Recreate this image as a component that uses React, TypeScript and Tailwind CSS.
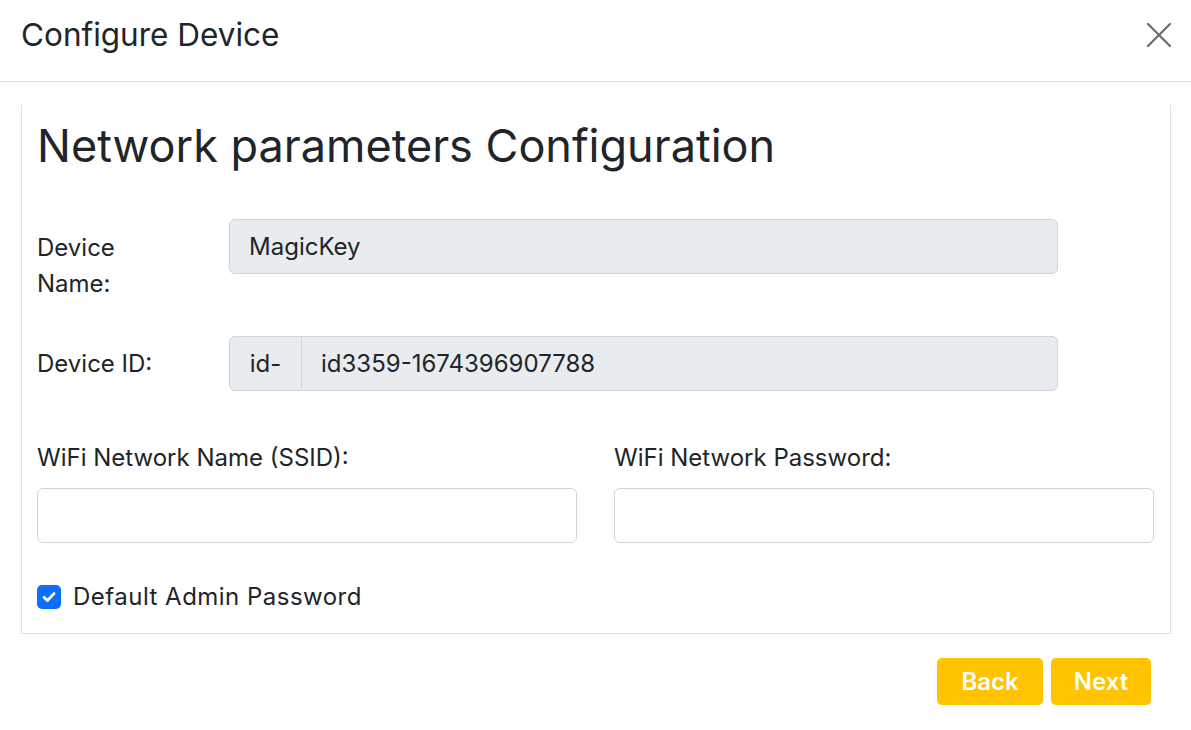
import React from "react";

export default function App() {
  const font = { fontFamily: "Inter, 'Noto Sans', sans-serif" };
  return (
    <div className="w-[1191px] h-[730px] bg-white text-[#212529] overflow-hidden" style={font}>
      <div className="h-[82px] border-b border-[#dee2e6] flex items-center justify-between pl-[21px] pr-[19px]">
        <h5 className="text-[31.5px] font-normal leading-[38px] -mt-[12px]">Configure Device</h5>
        <svg width="26" height="26" viewBox="0 0 26 26" className="-mt-[12px]">
          <path d="M2 2 L24 24 M24 2 L2 24" stroke="#6b6b6b" strokeWidth="2.2" strokeLinecap="round" />
        </svg>
      </div>
      <div className="pl-[21px] pr-[20px] pt-[23px]">
        <div className="border-x border-b border-[#dee2e6] pl-[15px] pr-[15px] pt-[17px] pb-[18px]">
          <h2 className="text-[45px] leading-[48px] font-normal mb-[49px]">Network parameters Configuration</h2>
          <div className="flex mb-[34px]">
            <div className="w-[192px] pt-[11px] text-[24px] leading-[36px]">Device<br />Name:</div>
            <div className="w-[829px] h-[55px] rounded-[6px] border border-[#ced4da] bg-[#e9ecef] flex items-center px-[19px] text-[24px]">MagicKey</div>
          </div>
          <div className="flex items-center mb-[49px]">
            <div className="w-[192px] text-[24px] leading-[36px]">Device ID:</div>
            <div className="w-[829px] h-[55px] rounded-[6px] border border-[#ced4da] bg-[#e9ecef] flex items-stretch text-[24px]">
              <div className="w-[72px] border-r border-[#ced4da] flex items-center justify-center">id-</div>
              <div className="flex items-center pl-[19px]">id3359-1674396907788</div>
            </div>
          </div>
          <div className="flex gap-[37px] mb-[36px]">
            <div className="w-[540px]">
              <div className="text-[24px] leading-[36px] mb-[12px]">WiFi Network Name (SSID):</div>
              <div className="h-[55px] rounded-[6px] border border-[#ced4da] bg-white"></div>
            </div>
            <div className="w-[540px]">
              <div className="text-[24px] leading-[36px] mb-[12px]">WiFi Network Password:</div>
              <div className="h-[55px] rounded-[6px] border border-[#ced4da] bg-white"></div>
            </div>
          </div>
          <div className="flex items-center gap-[12px]">
            <div className="w-[24px] h-[24px] rounded-[5px] bg-[#0d6efd] flex items-center justify-center">
              <svg width="16" height="16" viewBox="0 0 16 16">
                <path d="M3 8.3 L6.4 11.5 L13 4.6" stroke="white" strokeWidth="2.8" fill="none" strokeLinecap="round" strokeLinejoin="round" />
              </svg>
            </div>
            <div className="text-[24px] leading-[36px] tracking-[0.02em]">Default Admin Password</div>
          </div>
        </div>
        <div className="flex justify-end gap-[8px] pt-[24px] pr-[20px]">
          <button className="w-[106px] h-[47px] rounded-[5px] bg-[#ffc300] text-white text-[24px] font-semibold">Back</button>
          <button className="w-[100px] h-[47px] rounded-[5px] bg-[#ffc300] text-white text-[24px] font-semibold">Next</button>
        </div>
      </div>
    </div>
  );
}
